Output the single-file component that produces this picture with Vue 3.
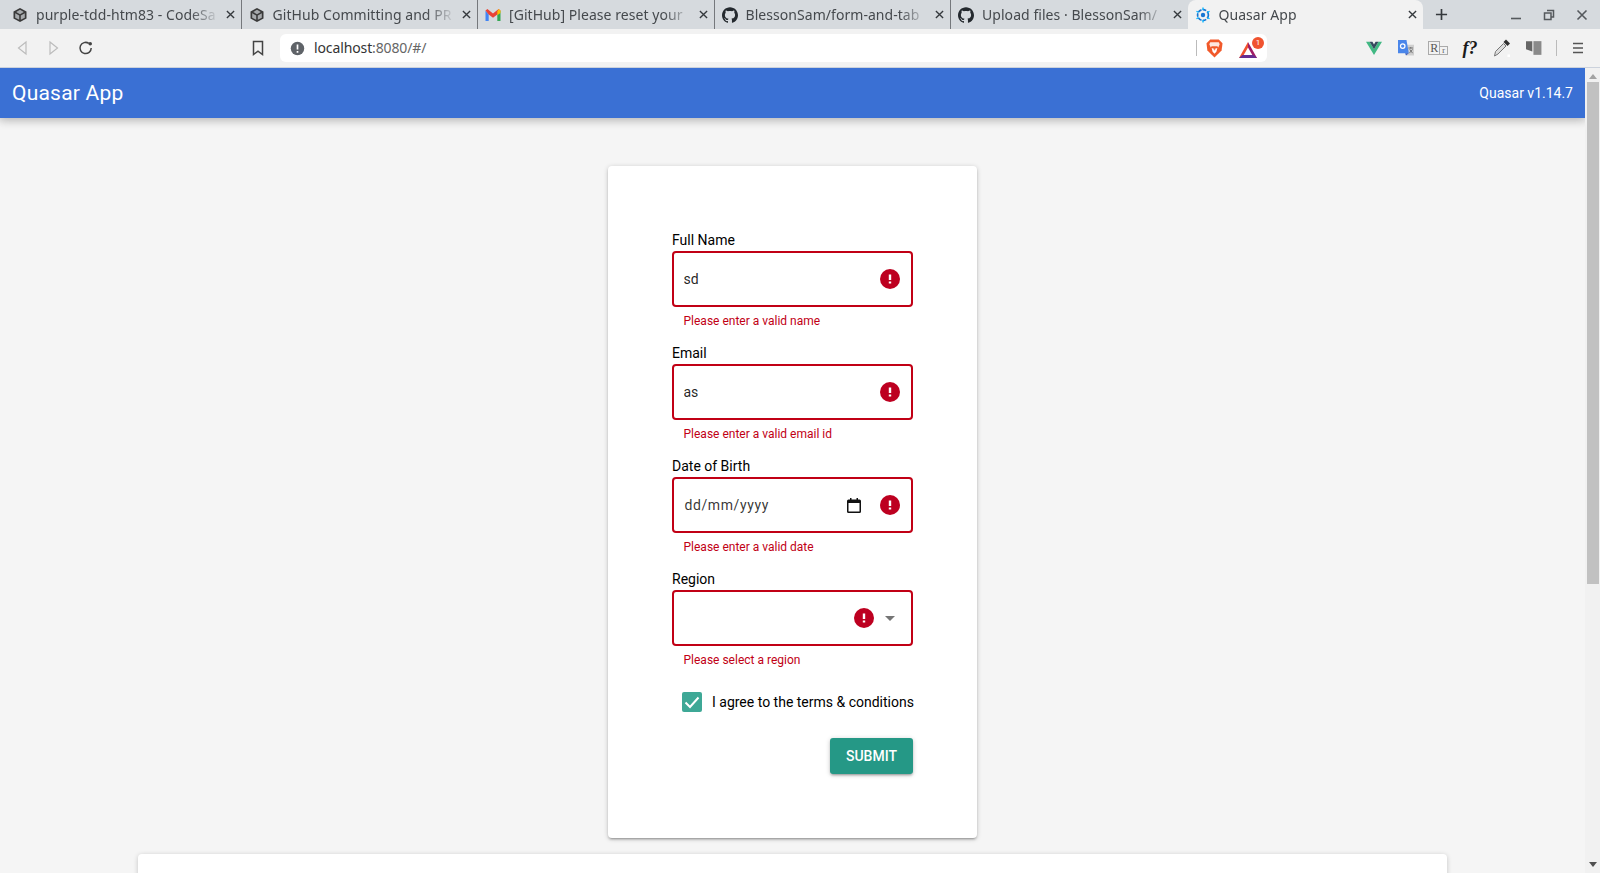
<script setup>
import { ref } from 'vue'

const tabs = [
  { id: 1, title: 'purple-tdd-htm83 - CodeSa', icon: 'cube' },
  { id: 2, title: 'GitHub Committing and PR', icon: 'cube' },
  { id: 3, title: '[GitHub] Please reset your', icon: 'gmail' },
  { id: 4, title: 'BlessonSam/form-and-tab', icon: 'github' },
  { id: 5, title: 'Upload files · BlessonSam/', icon: 'github' },
  { id: 6, title: 'Quasar App', icon: 'quasar', active: true },
]

const fields = [
  { id: 'name', label: 'Full Name', value: 'sd', type: 'text', error: 'Please enter a valid name' },
  { id: 'email', label: 'Email', value: 'as', type: 'text', error: 'Please enter a valid email id' },
  { id: 'dob', label: 'Date of Birth', type: 'date', error: 'Please enter a valid date' },
  { id: 'region', label: 'Region', value: '', type: 'select', error: 'Please select a region' },
]

const agreed = ref(true)
const github = 'M12 .297c-6.63 0-12 5.373-12 12 0 5.303 3.438 9.8 8.205 11.385.6.113.82-.258.82-.577 0-.285-.01-1.04-.015-2.04-3.338.724-4.042-1.61-4.042-1.61C4.422 18.07 3.633 17.7 3.633 17.7c-1.087-.744.084-.729.084-.729 1.205.084 1.838 1.236 1.838 1.236 1.07 1.835 2.809 1.305 3.495.998.108-.776.417-1.305.76-1.605-2.665-.3-5.466-1.332-5.466-5.93 0-1.31.465-2.38 1.235-3.22-.135-.303-.54-1.523.105-3.176 0 0 1.005-.322 3.3 1.23.96-.267 1.98-.399 3-.405 1.02.006 2.04.138 3 .405 2.28-1.552 3.285-1.23 3.285-1.23.645 1.653.24 2.873.12 3.176.765.84 1.23 1.91 1.23 3.22 0 4.61-2.805 5.625-5.475 5.92.42.36.81 1.096.81 2.22 0 1.606-.015 2.896-.015 3.286 0 .315.21.69.825.57C20.565 22.092 24 17.592 24 12.297c0-6.627-5.373-12-12-12'
</script>

<template>
  <div class="browser">
    <div class="tabstrip">
      <div v-for="tab in tabs" :key="tab.id" class="tab" :class="{ active: tab.active }">
        <svg v-if="tab.icon === 'cube'" class="favicon" viewBox="0 0 16 16">
          <path d="M8 1 14.500 4.500V11.500L8 15 1.500 11.500V4.500Z" fill="#3a3a3a" />
          <path d="M8 2.800 11.800 5 8 7.200 4.200 5ZM3.200 6.200 7.200 8.500V12.800L3.200 10.700ZM12.800 6.200 8.800 8.500V12.800L12.800 10.700Z" fill="#d6dade" opacity=".7" />
        </svg>
        <svg v-else-if="tab.icon === 'gmail'" class="favicon" viewBox="0 0 16 16">
          <path d="M.5 3.500V14H3.700V7.500Z" fill="#4285f4" />
          <path d="M15.500 3.500V14H12.300V7.500Z" fill="#34a853" />
          <path d="M.5 3.500 2.400 2 8 6.500 13.600 2 15.500 3.500 12.300 7.500 8 10.800 3.700 7.500Z" fill="#ea4335" />
          <path d="M12.300 4.500 13.600 2 15.500 3.500V6L12.300 8.300Z" fill="#fbbc04" />
        </svg>
        <svg v-else-if="tab.icon === 'github'" class="favicon" viewBox="0 0 24 24">
          <path :d="github" fill="#24292e" />
        </svg>
        <svg v-else class="favicon" viewBox="0 0 16 16">
          <circle cx="8" cy="8" r="5.400" fill="none" stroke="#1976d2" stroke-width="1.700" stroke-dasharray="3.600 1.300" />
          <circle cx="8" cy="8" r="2.200" fill="#1976d2" />
          <path d="M8 .5V3M8 13V15.500M1.500 4.300 3.600 5.500M12.400 10.500 14.500 11.700M1.500 11.700 3.600 10.500M12.400 5.500 14.500 4.300" stroke="#00b4ff" stroke-width="1.300" />
        </svg>
        <span class="tab-title">{{ tab.title }}</span>
        <svg class="tab-close" viewBox="0 0 10 10">
          <path d="M1 1 9 9M9 1 1 9" stroke="#35393d" stroke-width="1.500" />
        </svg>
      </div>
      <svg class="new-tab" viewBox="0 0 14 14">
        <path d="M7 1V13M1 7H13" stroke="#35393d" stroke-width="1.800" />
      </svg>
      <div class="window-controls">
        <svg viewBox="0 0 12 12"><path d="M1 9.500H11" stroke="#55595d" stroke-width="1.600" /></svg>
        <svg viewBox="0 0 12 12">
          <path d="M4 1.500H10.500V8H8.500M1.500 4H8V10.500H1.500Z" fill="none" stroke="#55595d" stroke-width="1.500" />
        </svg>
        <svg viewBox="0 0 12 12"><path d="M1.500 1.500 10.500 10.500M10.500 1.500 1.500 10.500" stroke="#55595d" stroke-width="1.600" /></svg>
      </div>
    </div>

    <div class="toolbar">
      <div class="tool">
        <svg viewBox="0 0 16 16"><path d="M12 2 4.500 8 12 14Z" fill="none" stroke="#bcbcbc" stroke-width="1.200" /></svg>
      </div>
      <div class="tool">
        <svg viewBox="0 0 16 16"><path d="M4 2 11.500 8 4 14Z" fill="none" stroke="#bcbcbc" stroke-width="1.200" /></svg>
      </div>
      <div class="tool">
        <svg viewBox="0 0 16 16">
          <path d="M13.200 8A5.600 5.600 0 1 1 10.800 3.400" fill="none" stroke="#444" stroke-width="1.500" />
          <circle cx="12.200" cy="3.800" r="1.800" fill="#444" />
        </svg>
      </div>
      <div class="tool bookmark">
        <svg viewBox="0 0 16 16"><path d="M3.500 1.500H12.500V14.500L8 11.200 3.500 14.500Z" fill="none" stroke="#444" stroke-width="1.500" /></svg>
      </div>
      <div class="urlbar">
        <svg class="info" viewBox="0 0 16 16">
          <circle cx="8" cy="8" r="7.200" fill="#5f6368" />
          <path d="M8 3.600V9M8 10.600V12.400" stroke="#fff" stroke-width="1.800" />
        </svg>
        <span class="url"><span class="host">localhost</span>:8080/#/</span>
        <div class="url-actions">
          <span class="url-sep"></span>
          <svg class="brave" viewBox="0 0 18 20">
            <path d="M4.500 .5H13.500L17.500 4.500 16.500 12 9 19.500 1.500 12 .5 4.500Z" fill="#f1592a" />
            <path d="M4.500 3.500H13.500L14.500 5.500 13 9 12 7.500H6L5 9 3.500 5.500Z" fill="#fff" opacity=".85" />
            <path d="M6 9.500 9 10.500 12 9.500 11 13.500 9 15.500 7 13.500Z" fill="#fff" />
            <path d="M7.800 10.700H10.200L9 12.200Z" fill="#f1592a" />
          </svg>
          <div class="bat">
            <svg viewBox="0 0 18 16">
              <path d="M9 0 0 16H5.500L9 9.500Z" fill="#f0502e" />
              <path d="M9 0 18 16H12.500L9 9.500Z" fill="#a01c64" />
              <path d="M0 16H18L14.500 13H3.500Z" fill="#662d91" />
              <path d="M9 5.500 4.700 13H13.300Z" fill="#fff" />
            </svg>
            <span class="bat-badge">1</span>
          </div>
        </div>
      </div>
      <div class="extensions">
        <div class="tool">
          <svg viewBox="0 0 18 16">
            <path d="M0 1H4L9 9.500 14 1H18L9 16Z" fill="#41b883" />
            <path d="M4 1H7.200L9 4.200 10.800 1H14L9 9.500Z" fill="#35495e" />
          </svg>
        </div>
        <div class="tool">
          <svg viewBox="0 0 17 17">
            <path d="M8 5H17V16.500H9Z" fill="#cfcfcf" />
            <path d="M0 0H9L11.500 14H0Z" fill="#4a86ea" />
            <path d="M7.500 14H11.500L8.500 16.500Z" fill="#3a5fc0" />
            <circle cx="5" cy="6.500" r="2.400" fill="none" stroke="#fff" stroke-width="1.300" />
            <path d="M11 8.500H16M13.500 7.500V9M12 14 15.500 10M12.500 10 15.500 14" stroke="#666" stroke-width=".9" fill="none" />
          </svg>
        </div>
        <div class="tool rr">
          <span class="rr-big">R</span><span class="rr-small">r</span>
        </div>
        <div class="tool fq">f?</div>
        <div class="tool">
          <svg class="dropper" viewBox="0 0 20 20">
            <path d="M14 1.500 18 5.500 15.500 8 11.500 4Z" fill="#2f2f2f" />
            <path d="M11.500 5.500 14 8 6 16 2.500 18 3.500 13.500Z" fill="#dcdcdc" stroke="#777" stroke-width="1" />
            <rect x="15.500" y="16.500" width="2.500" height="2.500" fill="#fff" />
          </svg>
        </div>
        <div class="tool">
          <svg viewBox="0 0 14 14">
            <path d="M0 1H5.500V10L0 8Z" fill="#666" />
            <path d="M6.500 1H13.500V13H6.500Z" fill="#8a8a8a" />
          </svg>
        </div>
        <span class="ext-sep"></span>
        <div class="tool menu">
          <svg viewBox="0 0 12 12">
            <path d="M1 1.500H11M1 6H11M1 10.500H11" stroke="#555" stroke-width="1.500" />
          </svg>
        </div>
      </div>
    </div>

    <div class="viewport">
      <div class="page">
        <header class="app-header">
          <div class="app-title">Quasar App</div>
          <div class="app-version">Quasar v1.14.7</div>
        </header>

        <main class="content">
          <div class="form-card">
            <div v-for="field in fields" :key="field.id" class="field">
              <label class="field-label">{{ field.label }}</label>
              <div class="field-box">
                <input v-if="field.type === 'text'" class="field-input" :value="field.value" readonly />
                <div v-else-if="field.type === 'date'" class="date-value">dd/mm/yyyy</div>
                <div v-else class="field-input"></div>
                <svg v-if="field.type === 'date'" class="calendar" viewBox="0 0 14 15">
                  <path d="M3 0H4.500V1.500H9.500V0H11V1.500H12.500A1.500 1.500 0 0 1 14 3V13.500A1.500 1.500 0 0 1 12.500 15H1.500A1.500 1.500 0 0 1 0 13.500V3A1.500 1.500 0 0 1 1.500 1.500H3ZM1.500 5V13.500H12.500V5Z" fill="#111" fill-rule="evenodd" />
                </svg>
                <svg class="error-icon" :class="{ shifted: field.type === 'select' }" viewBox="0 0 20 20">
                  <circle cx="10" cy="10" r="10" fill="#bd0020" />
                  <path d="M10 5.500V11M10 12.500V14.500" stroke="#fff" stroke-width="2.400" />
                </svg>
                <svg v-if="field.type === 'select'" class="caret" viewBox="0 0 10 5">
                  <path d="M0 0H10L5 5Z" fill="#757575" />
                </svg>
              </div>
              <div class="field-error">{{ field.error }}</div>
            </div>

            <div class="agree">
              <span class="check-wrap">
                <span class="check-box" :class="{ on: agreed }">
                  <svg viewBox="0 0 20 20">
                    <path d="M3.500 10.500 8 15 16.500 5.500" fill="none" stroke="#fff" stroke-width="2" />
                  </svg>
                </span>
              </span>
              <span class="agree-text">I agree to the terms &amp; conditions</span>
            </div>

            <div class="actions">
              <button class="submit" type="button">Submit</button>
            </div>
          </div>

          <div class="table-card"></div>
        </main>
      </div>

      <div class="scrollbar">
        <span class="arrow up"></span>
        <div class="track"><div class="thumb"></div></div>
        <span class="arrow down"></span>
      </div>
    </div>
  </div>
</template>

<style>
html,
body {
  height: 100%;
  overflow: hidden;
}
</style>

<style scoped>
.browser {
  display: flex;
  flex-direction: column;
  height: 873px;
  overflow: hidden;
  font-family: Roboto, "Liberation Sans", sans-serif;
}

.tabstrip {
  display: flex;
  height: 29px;
  padding-left: 5px;
  background: #d6dade;
  flex: none;
}

.tab {
  display: flex;
  align-items: center;
  width: 236.5px;
  flex: none;
  padding: 0 6px 0 7px;
  box-sizing: border-box;
  border-right: 1px solid #75787c;
  font-family: "Noto Sans", sans-serif;
  font-size: 14px;
  letter-spacing: 0.05px;
  color: #45494d;
}

.tab:nth-child(5) {
  border-right: none;
}

.tab.active {
  background: #f2f2f2;
  border-right: none;
  border-radius: 8px 8px 0 0;
  width: 235px;
}

.favicon {
  width: 16px;
  height: 16px;
  flex: none;
  margin-right: 8px;
}

.tab-title {
  flex: 1;
  min-width: 0;
  white-space: nowrap;
  overflow: hidden;
  margin-right: 6px;
  -webkit-mask-image: linear-gradient(to right, #000 84%, rgba(0, 0, 0, 0.1) 98%);
  mask-image: linear-gradient(to right, #000 84%, rgba(0, 0, 0, 0.1) 98%);
}

.tab-close {
  width: 9px;
  height: 9px;
  flex: none;
}

.new-tab {
  width: 13px;
  height: 13px;
  margin: 8px 0 0 12px;
}

.window-controls {
  display: flex;
  align-items: center;
  gap: 21px;
  margin-left: auto;
  padding-right: 12px;
}

.window-controls svg {
  width: 12px;
  height: 12px;
}

.toolbar {
  display: flex;
  align-items: center;
  height: 39px;
  flex: none;
  box-sizing: border-box;
  padding: 0 6px;
  background: #f2f2f2;
  border-bottom: 1px solid #ccd2dc;
}

.tool {
  display: flex;
  align-items: center;
  justify-content: center;
  width: 32px;
  height: 28px;
  flex: none;
}

.tool svg {
  width: 16px;
  height: 16px;
}

.tool svg.dropper {
  width: 20px;
  height: 20px;
}

.bookmark {
  margin-left: 140px;
}

.urlbar {
  display: flex;
  align-items: center;
  width: 987px;
  height: 28px;
  margin-left: 6px;
  padding: 0 10px;
  box-sizing: border-box;
  background: #fff;
  border-radius: 6px;
  font-family: "Noto Sans", sans-serif;
  font-size: 14px;
  color: #666;
}

.info {
  width: 15px;
  height: 15px;
  margin-right: 9px;
}

.url {
  letter-spacing: -0.12px;
  margin-top: -2px;
}

.host {
  color: #333;
}

.url-actions {
  display: flex;
  align-items: center;
  margin-left: auto;
}

.url-sep {
  width: 1px;
  height: 16px;
  margin-right: 9px;
  background: #bbb;
}

.brave {
  width: 17px;
  height: 19px;
  margin-right: 16px;
}

.bat {
  position: relative;
  display: flex;
  margin-top: 3px;
}

.bat svg {
  width: 18px;
  height: 16px;
}

.bat-badge {
  position: absolute;
  top: -5px;
  right: -7px;
  width: 12px;
  height: 12px;
  border-radius: 50%;
  background: #f0532f;
  color: #fff;
  font-family: Roboto, sans-serif;
  font-size: 8px;
  line-height: 12px;
  text-align: center;
}

.extensions {
  display: flex;
  align-items: center;
  margin-left: auto;
}

.rr {
  font-family: "Liberation Serif", serif;
  color: #555;
}

.rr-big {
  border: 1px solid #aaa;
  font-size: 12px;
  line-height: 12px;
  padding: 0 1px;
}

.rr-small {
  border: 1px solid #aaa;
  border-left: none;
  font-size: 8px;
  line-height: 7px;
  padding: 0 2px;
  align-self: flex-end;
  margin-bottom: 7px;
}

.fq {
  font-family: "Liberation Serif", serif;
  font-style: italic;
  font-weight: 700;
  font-size: 18px;
  color: #1a1a1a;
}

.ext-sep {
  width: 1px;
  height: 16px;
  margin: 0 6px;
  background: #bbb;
}

.menu {
  width: 32px;
  margin-left: -1px;
}

.menu svg {
  width: 12px;
  height: 12px;
}

.viewport {
  display: flex;
  flex: 1;
  min-height: 0;
}

.page {
  flex: 1;
  min-width: 0;
  background: #f5f5f5;
  overflow: hidden;
}

.app-header {
  position: relative;
  display: flex;
  align-items: center;
  justify-content: space-between;
  height: 50px;
  padding: 0 12px;
  background: #3a70d4;
  color: #fff;
  box-shadow: 0 0 10px 2px rgba(0, 0, 0, 0.2), 0 0 10px rgba(0, 0, 0, 0.14);
}

.app-title {
  font-size: 21px;
  letter-spacing: 0.01em;
}

.app-version {
  font-size: 14px;
}

.content {
  display: flex;
  flex-direction: column;
  align-items: center;
  gap: 16px;
  padding-top: 48px;
}

.form-card {
  width: 369px;
  box-sizing: border-box;
  padding: 64px;
  background: #fff;
  border-radius: 4px;
  box-shadow: 0 1px 5px rgba(0, 0, 0, 0.2), 0 2px 2px rgba(0, 0, 0, 0.14), 0 3px 1px -2px rgba(0, 0, 0, 0.12);
}

.field {
  height: 113px;
}

.field-label {
  display: block;
  font-size: 14px;
  line-height: 21px;
  color: #000;
}

.field-box {
  display: flex;
  align-items: center;
  height: 56px;
  padding: 0 11.5px 0 9.5px;
  box-sizing: border-box;
  border: 2px solid #c10015;
  border-radius: 4px;
}

.field-input {
  flex: 1;
  min-width: 0;
  padding: 0;
  border: none;
  outline: none;
  background: transparent;
  font: inherit;
  font-size: 14px;
  color: rgba(0, 0, 0, 0.87);
}

.date-value {
  flex: 1;
  padding-left: 1px;
  font-size: 14px;
  letter-spacing: 0.6px;
  color: rgba(0, 0, 0, 0.8);
}

.calendar {
  width: 14px;
  height: 15px;
  flex: none;
  margin-right: 18.5px;
}

.error-icon {
  width: 20px;
  height: 20px;
  flex: none;
}

.error-icon.shifted {
  margin-right: 11px;
}

.caret {
  width: 10px;
  height: 5px;
  flex: none;
  margin-right: 5px;
}

.field-error {
  padding: 6px 11.5px 0;
  font-size: 12px;
  line-height: 16px;
  color: #c10015;
}

.agree {
  display: flex;
  align-items: center;
  height: 40px;
  font-size: 14px;
  color: #000;
}

.check-wrap {
  display: flex;
  align-items: center;
  justify-content: center;
  width: 40px;
  height: 40px;
  flex: none;
}

.check-box {
  display: block;
  width: 20px;
  height: 20px;
  border-radius: 2px;
  background: #3ea896;
}

.check-box svg {
  display: block;
  width: 20px;
  height: 20px;
}

.agree-text {
  white-space: nowrap;
}

.actions {
  display: flex;
  justify-content: flex-end;
  margin-top: 16px;
}

.submit {
  width: 83px;
  height: 36px;
  padding: 0;
  border: none;
  border-radius: 3px;
  background: #259886;
  color: #fff;
  font-family: inherit;
  font-size: 14px;
  font-weight: 500;
  text-transform: uppercase;
  box-shadow: 0 1px 5px rgba(0, 0, 0, 0.2), 0 2px 2px rgba(0, 0, 0, 0.14), 0 3px 1px -2px rgba(0, 0, 0, 0.12);
}

.table-card {
  width: 1309px;
  height: 300px;
  flex: none;
  background: #fff;
  border-radius: 4px;
  box-shadow: 0 1px 5px rgba(0, 0, 0, 0.2);
}

.scrollbar {
  display: flex;
  flex-direction: column;
  align-items: center;
  width: 15px;
  flex: none;
  background: #f1f1f1;
}

.arrow {
  width: 0;
  height: 0;
  flex: none;
  border-left: 4px solid transparent;
  border-right: 4px solid transparent;
}

.arrow.up {
  margin: 6px 0 3px;
  border-bottom: 5px solid #a3a3a3;
}

.arrow.down {
  margin: 3px 0 6px;
  border-top: 5px solid #505050;
}

.track {
  flex: 1;
  width: 100%;
}

.thumb {
  width: 12px;
  height: 502px;
  margin: 0 auto;
  background: #c1c1c1;
}
</style>
